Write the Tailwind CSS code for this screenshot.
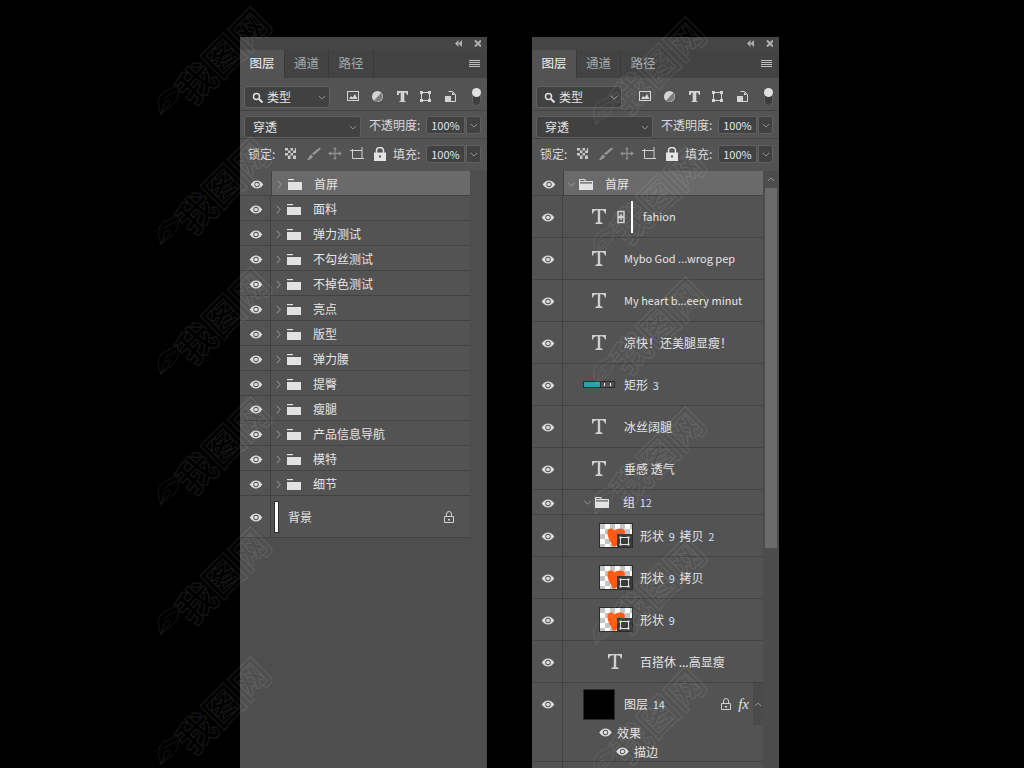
<!DOCTYPE html>
<html lang="zh"><head><meta charset="utf-8"><script src="https://cdn.jsdelivr.net/npm/@tailwindcss/browser@4"></script></head>
<body class="m-0 bg-black">
<svg class="absolute w-0 h-0" width="0" height="0">
<symbol id="eye" viewBox="0 0 14 10"><path fill="#dcdcdc" d="M0 5C2 2 4.300.5 7 .5S12 2 14 5c-2 3-4.300 4.500-7 4.500S2 8 0 5z"/><circle cx="7" cy="5" r="3" fill="#535353"/><circle cx="7" cy="5" r="2" fill="#dcdcdc"/></symbol>
<symbol id="fc" viewBox="0 0 14 11"><path fill="#e2e2e2" d="M0 3h14v8H0z"/><path fill="#e2e2e2" d="M0 0h6v1.200H0z"/></symbol>
<symbol id="fo" viewBox="0 0 14 11"><path fill="#e2e2e2" d="M0 0h6l1 2h7v9H0z"/><path fill="#5f5f5f" d="M1 3.200h12v1.300H1zM1 1h4.400l.5 1H1z"/></symbol>
<symbol id="t" viewBox="0 0 14 15"><path fill="#cfcfcf" d="M0 0h14v4.500h-1.200C12.600 2.300 11.500 1.300 8.200 1.300v11.600l2.300.8V15h-7v-1.300l2.300-.8V1.300C2.500 1.300 1.400 2.300 1.200 4.500H0z"/></symbol>
<symbol id="ca" viewBox="0 0 10 6"><path fill="none" stroke="#a8a8a8" d="M1 1l4 4 4-4"/></symbol>
<symbol id="cr" viewBox="0 0 6 10"><path fill="none" stroke="#a8a8a8" d="M1 0.500l4 4.500-4 4.500"/></symbol>
<symbol id="heart" viewBox="0 0 32 23"><path fill="#fff" d="M0 0h32v23H0z"/><path fill="none" stroke="#c4c4c4" stroke-width="5" stroke-dasharray="5 5" d="M0 2.500h32M5 7.500h27M0 12.500h32M5 17.500h27M0 22.500h32"/><path fill="#ff5a12" d="M8 6c2-2.500 5-1.500 7 .5 1-2 6-3 9-1 2 2 1 5-2 8l-6 9h-3C10 17 6 11 8 6z"/><path fill="#3a3a3a" d="M17 10h15v13H17z"/><path fill="none" stroke="#e0e0e0" d="M20.500 13.500h8v7h-8z"/><path fill="#e0e0e0" d="M19.500 12.500h2v2h-2zM27.500 12.500h2v2h-2zM19.500 19.500h2v2h-2zM27.500 19.500h2v2h-2z"/></symbol>
<symbol id="lock" viewBox="0 0 10 12"><path fill="none" stroke="#d0d0d0" d="M2.500 5V3a2.500 2.500 0 015 0v2M.5 5.500h9v6h-9z"/><path fill="#d0d0d0" d="M4 8h2v1.500H4z"/></symbol>
<symbol id="head" viewBox="0 0 26 7"><path fill="#b0b0b0" d="M3.500 0v7L0 3.500zM7 0v7L3.500 3.500z"/><path fill="none" stroke="#b0b0b0" stroke-width="2" d="M20 .5l6 6M26 .5l-6 6"/></symbol>
<symbol id="menu" viewBox="0 0 12 8"><path fill="#c0c0c0" d="M0 0h11v1H0zM0 2h11v1H0zM0 4h11v1H0zM0 6h11v1H0z"/></symbol>
<symbol id="filters" viewBox="0 0 110 12"><path fill="#d4d4d4" fill-rule="evenodd" d="M0 0h12v10H0zM1 1v8h10V1z"/><path fill="#d4d4d4" d="M2 8l2-3 1.500 1.500L8 3l2.500 5z"/><circle cx="30.500" cy="5.500" r="5.500" fill="#d4d4d4"/><path fill="#7d7d7d" d="M34.500 1.500L27 9.500l1 1.300c4 1 7.500-2 7.500-5.300z"/><path fill="#d4d4d4" d="M50 0h11v4h-1c0-1-.8-2.500-2.700-2.500V10l1.500.5V11h-6.600v-.5l1.500-.5V1.500C52 1.500 51.800 3 51.800 4H50z"/><path fill="none" stroke="#d4d4d4" d="M74.500 1.500h8v8h-8z"/><path fill="#d4d4d4" d="M73 0h3v3h-3zM81 0h3v3h-3zM73 8h3v3h-3zM81 8h3v3h-3z"/><path fill="none" stroke="#d4d4d4" d="M101.500.5h4l3 3v7h-5"/><path fill="#d4d4d4" d="M98 5h6v6h-6z"/><path fill="#d4d4d4" d="M105 1v3h3z"/></symbol>
<symbol id="locks" viewBox="0 0 101 14"><path fill="#c9c9c9" d="M0 1h11v11H0z"/><path fill="#555" d="M3 1h2.500v2.500H3zM8 1h2v2.500H8zM0 3.500h3V6H0zM5.500 3.500H8V6H5.500zM3 6h2.500v2.500H3zM8 6h3v2.500H8zM0 8.500h3V12H0zM5.500 8.500H8V12H5.500z"/><path fill="#999" d="M34 1c1-.5 2 .3 1.500 1.300L29 8l-2-1.500zM26 7.500l2 1.500c-.5 2-2.500 4-6 4 1.500-1 2-4.500 4-5.500z"/><path fill="#8f8f8f" d="M50 0l2 2.300h-1.400v3.400H54V4.300L57 6.500 54 8.700V7.300h-3.400v3.400H52L50 13l-2-2.300h1.400V7.300H46v1.400l-3-2.200 3-2.200v1.400h3.400V2.300H48z"/><path fill="none" stroke="#cfcfcf" d="M67.500 3.500H77V12M67.500 2v9.500H79M77 0v3.500M65 3.500h2.500"/><path fill="#e4e4e4" d="M89 5.500h12V14H89z"/><path fill="none" stroke="#e4e4e4" stroke-width="1.500" d="M91.500 6V3.500a3.500 3 0 017 0V6"/><path fill="#535353" d="M94 8.500h2v2h-2z"/></symbol>
<symbol id="mark" viewBox="0 0 24 44"><path fill="none" stroke="#fff" d="M14 1c1 6 9 11 6 22-1 7-6 11-9 20C6 36 0 32 1 22 2 14 10 12 14 1zM11 43c-1-7 5-11 4-18-1-4-5-1-6 3-1 3 2 5 2 15zM16 10c-3 5-8 8-9 14"/></symbol>
</svg>

<div class="relative w-[1024px] h-[768px] overflow-hidden bg-black flex pl-[240px] pt-[37px] gap-[45px] text-[12px] text-[#e4e4e4] font-['Noto_Sans_CJK_SC','Liberation_Sans',sans-serif]">
<section id="p1" class="w-[247px] h-[731px] bg-[#4e4e4e] flex flex-col shrink-0 overflow-hidden"></section>
<section id="p2" class="w-[247px] h-[731px] bg-[#535353] flex flex-col shrink-0 overflow-hidden"></section>
<div id="wm" class="absolute left-0 top-0 w-[1024px] h-[768px] pointer-events-none overflow-hidden opacity-[0.09]"></div>
</div>

<script>
const use=(id,c)=>`<svg class="${c}"><use href="#${id}"/></svg>`;
const eye=use('eye','w-[14px] h-[9px]');
const drop=()=>`<div class="w-[15px] h-[18px] ml-[1px] bg-[#414141] border border-[#606060] rounded-r-[3px] flex items-center justify-center">${use('ca','w-[8px] h-[5px]')}</div>`;
const pct=`<div class="w-[39px] h-[18px] bg-[#414141] border border-[#606060] rounded-l-[3px] flex items-center justify-center text-[#dfe6ee] text-[11px]">100%</div>`;
const head=`
<div class="h-[13px] shrink-0 bg-[#454545] flex items-center justify-end pr-[6px]">${use('head','w-[26px] h-[7px]')}</div>
<div class="h-[28px] shrink-0 bg-[#434343] flex text-[#a3a9ad] text-[12.5px]">
  <div class="w-[45px] bg-[#535353] border-r border-[#3a3a3a] text-[#f0f0f0] flex items-center justify-center pb-[2px]">图层</div>
  <div class="w-[44px] border-r border-[#3a3a3a] flex items-center justify-center pb-[2px]">通道</div>
  <div class="w-[45px] border-r border-[#3a3a3a] flex items-center justify-center pb-[2px]">路径</div>
  <div class="flex-1 flex items-center justify-end pr-[6px]">${use('menu','w-[12px] h-[8px]')}</div>
</div>
<div class="h-[33px] shrink-0 bg-[#535353] border-b border-[#424242] flex items-start pl-[4px] pt-[8px]">
  <div class="w-[86px] h-[22px] bg-[#414141] border border-[#606060] rounded-[3px] flex items-center pl-[7px] pr-[3px]">
    <svg class="w-[11px] h-[11px] mr-[4px]" viewBox="0 0 11 11"><circle cx="4.500" cy="4.500" r="3" fill="none" stroke="#e0e0e0" stroke-width="1.500"/><path stroke="#e0e0e0" stroke-width="2" d="M7 7l3.500 3.500"/></svg>
    <span class="flex-1">类型</span>${use('ca','w-[8px] h-[5px]')}
  </div>
  ${use('filters','w-[110px] h-[12px] ml-[17px] mt-[5px]')}
  <div class="ml-[15px] w-[9px] h-[18px] mt-[2px] rounded-full bg-[#3e3e3e] border border-[#606060] relative"><div class="absolute left-[-1px] top-[-1px] w-[9px] h-[9px] rounded-full bg-[#e0e0e0]"></div></div>
</div>
<div class="h-[28px] shrink-0 bg-[#535353] border-b border-[#424242] flex items-start pl-[4px] pt-[5px]">
  <div class="w-[117px] h-[22px] bg-[#414141] border border-[#606060] rounded-[3px] flex items-center pl-[8px] pr-[3px]"><span class="flex-1">穿透</span>${use('ca','w-[8px] h-[5px]')}</div>
  <span class="ml-[8px] w-[57px] h-[18px] leading-[18px] text-[#d8d8d8]">不透明度:</span>
  ${pct}${drop()}
</div>
<div class="h-[32px] shrink-0 bg-[#535353] flex items-center pl-[8px] pb-[2px]">
  <span class="w-[37px] text-[#d8d8d8]">锁定:</span>
  ${use('locks','w-[101px] h-[14px]')}
  <span class="ml-[7px] w-[33px] text-[#d8d8d8]">填充:</span>
  ${pct}${drop()}
</div>`;
const eyeCell=(b=true)=>`<div class="w-[31px] shrink-0 pt-[2px] pl-[2px] flex items-center justify-center ${b?'border-r border-[#424242]':''}">${eye}</div>`;
const leftRow=(name,i)=>`<div class="h-[25px] shrink-0 flex bg-[#535353] border-b border-[#424242]">${eyeCell(i>0)}<div class="flex-1 ${i==0?'bg-[#6a6a6a] border-l border-[#424242]':''} flex items-center pt-[2px] pl-[5px]">${use('cr','w-[5px] h-[9px]')}${use('fc','w-[14px] h-[11px] ml-[6px] mr-[12px]')}${name}</div></div>`;
const names=['首屏','面料','弹力测试','不勾丝测试','不掉色测试','亮点','版型','弹力腰','提臀','瘦腿','产品信息导航','模特','细节'];
document.getElementById('p1').innerHTML=head+`<div class="w-[230px] flex flex-col">`+names.map(leftRow).join('')+
`<div class="h-[42px] shrink-0 flex bg-[#535353] border-b border-[#424242]">${eyeCell()}<div class="flex-1 flex items-center pl-[4px]"><div class="w-[3px] h-[30px] bg-white outline outline-1 outline-[#2c2c2c] mr-[10px]"></div><span class="flex-1">背景</span>${use('lock','w-[10px] h-[12px] mr-[16px]')}</div></div></div>`;

const n=s=>`<span class="text-[#cfe0f2] text-[11px]">${s}</span>`;
const tall=(pl,inner)=>`<div class="h-[42px] shrink-0 flex border-b border-[#424242]">${eyeCell()}<div class="flex-1 flex items-center ${pl}">${inner}</div></div>`;
const tRow=(txt,c='')=>tall('pl-[29px]',use('t','w-[14px] h-[15px] mr-[18px]')+`<span class="${c}">${txt}</span>`);
const sh=txt=>tall('pl-[37px]',use('heart','w-[32px] h-[23px] mr-[8px] outline outline-1 outline-[#2c2c2c]')+`<span class="[word-spacing:2px]">${txt}</span>`);
const rows=[
`<div class="h-[25px] shrink-0 flex border-b border-[#424242]">${eyeCell(false)}<div class="flex-1 bg-[#6a6a6a] flex items-center pt-[2px] pl-[3px] border-l border-[#424242]">${use('ca','w-[9px] h-[5px]')}${use('fo','w-[14px] h-[11px] ml-[3px] mr-[12px]')}首屏</div></div>`,
tall('pl-[29px]',use('t','w-[14px] h-[15px] mr-[11px]')+`<svg class="w-[8px] h-[14px] mr-[6px]" viewBox="0 0 8 14"><path fill="none" stroke="#cfcfcf" stroke-width="1.500" d="M1 1.500h6v5H1zM1 7.500h6v5H1zM4 4v6"/></svg><div class="w-[2px] h-[32px] bg-white mr-[10px]"></div><span class="text-[11px]">fahion</span>`),
tRow('Mybo God ...wrog pep','text-[11px]'),
tRow('My heart b...eery minut','text-[11px]'),
tRow('凉快！还美腿显瘦！'),
tall('pl-[20px]',`<svg class="w-[32px] h-[7px] mr-[9px]" viewBox="0 0 32 7"><path fill="#2c2c2c" d="M0 0h32v7H0z"/><path fill="#2e9fb0" d="M1 1h16v5H1z"/><path fill="#535353" d="M18 1h13v5H18z"/><path fill="#fff" d="M21 2h1v3h-1zM27 2h1v3h-1z"/></svg><span class="[word-spacing:2px]">矩形 ${n(3)}</span>`),
tRow('冰丝阔腿'),tRow('垂感 透气'),
`<div class="h-[25px] shrink-0 flex border-b border-[#424242]">${eyeCell()}<div class="flex-1 flex items-center pl-[20px]">${use('ca','w-[9px] h-[5px]')}${use('fo','w-[14px] h-[11px] ml-[3px] mr-[14px]')}<span class="[word-spacing:2px]">组 ${n(12)}</span></div></div>`,
sh(`形状 ${n(9)} 拷贝 ${n(2)}`),sh(`形状 ${n(9)} 拷贝`),sh(`形状 ${n(9)}`),
tall('pl-[45px]',use('t','w-[14px] h-[15px] mr-[18px]')+`<span>百搭休 ...高显瘦</span>`),
`<div class="h-[79px] shrink-0 flex border-b border-[#424242]"><div class="w-[31px] pl-[2px] flex justify-center pt-[17px] border-r border-[#424242]">${eye}</div><div class="flex-1 flex flex-col"><div class="h-[42px] flex items-center pl-[20px]"><div class="w-[32px] h-[31px] bg-black border border-[#2c2c2c] mr-[9px]"></div><span class="flex-1 [word-spacing:2px]">图层 ${n(14)}</span>${use('lock','w-[10px] h-[12px] mr-[7px]')}<span class="italic font-['Liberation_Serif',serif] text-[15px] mr-[4px]">fx</span><div class="w-[10px] h-[42px] bg-[#4a4a4a] flex items-center justify-center">${use('ca','w-[8px] h-[5px] rotate-180')}</div></div><div class="h-[19px] flex items-center pl-[36px] mt-[-2px]">${use('eye','w-[13px] h-[9px] mr-[5px]')}效果</div><div class="h-[19px] flex items-center pl-[53px]">${use('eye','w-[13px] h-[9px] mr-[5px]')}描边</div></div></div>`,
`<div class="h-[42px] shrink-0 flex"><div class="w-[31px] border-r border-[#424242]"></div><div class="flex-1 pl-[37px] pt-[6px]"><div class="w-[32px] h-[32px] bg-black border border-[#2c2c2c]"></div></div></div>`
];
document.getElementById('p2').innerHTML=head+`<div class="flex flex-1 min-h-0"><div class="w-[231px] flex flex-col">`+rows.join('')+`</div><div class="flex-1 bg-[#4c4c4c] flex flex-col items-center"><div class="h-[17px] flex items-center justify-center">${use('ca','w-[8px] h-[5px] rotate-180')}</div><div class="w-[12px] h-[360px] bg-[#6b6b6b]"></div></div></div>`;

let wm='';
for(const [x,y0] of [[153,0],[588,10]]){for(let i=0;i<6;i++){const y=y0+i*130;
 wm+=`<svg class="absolute w-[20px] h-[38px] rotate-[25deg]" style="left:${x+6}px;top:${y+80}px"><use href="#mark"/></svg><div class="absolute -rotate-45 text-[38px] leading-none font-bold text-transparent [-webkit-text-stroke:1px_white] whitespace-nowrap" style="left:${x+12}px;top:${y+36}px">我图网</div>`;}}
document.getElementById('wm').innerHTML=wm;
</script>
</body></html>
